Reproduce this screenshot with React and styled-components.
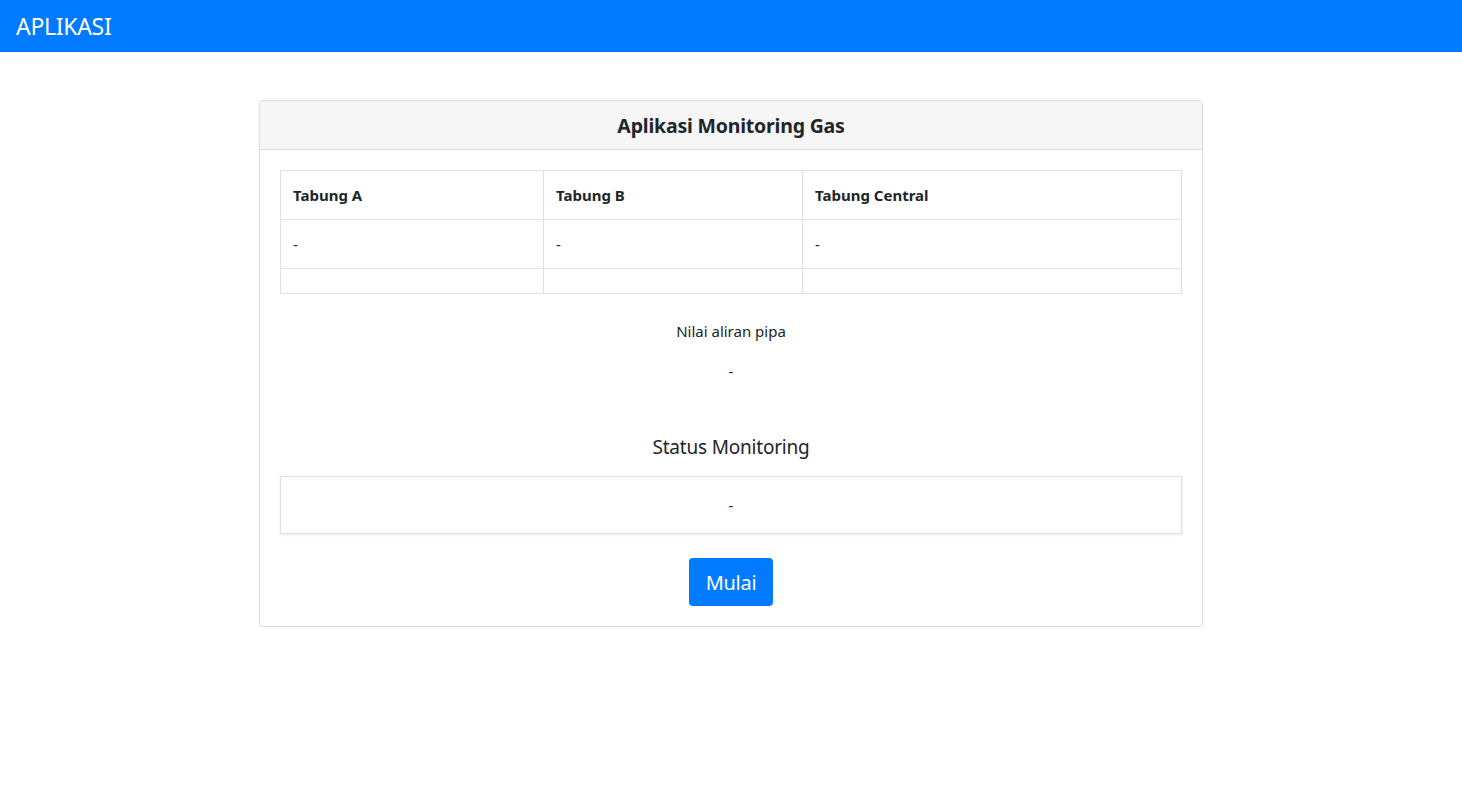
import React, { useState } from "react";
import styled, { createGlobalStyle } from "styled-components";

const GlobalStyle = createGlobalStyle`
  *, *::before, *::after {
    box-sizing: border-box;
  }
  body {
    margin: 0;
    font-family: "Noto Sans", "Open Sans", sans-serif;
    color: #212529;
    background: #fff;
  }
`;

const Navbar = styled.nav`
  height: 52px;
  background-color: #007bff;
  display: flex;
  align-items: center;
  padding: 0 16px;
  .brand {
    color: #fff;
    font-size: 23px;
    letter-spacing: -0.3px;
  }
`;

const Page = styled.main`
  display: flex;
  justify-content: center;
  padding-top: 48px;
`;

const Card = styled.div`
  width: 944px;
  border: 1px solid #dcdcdc;
  border-radius: 4px;
  box-shadow: 0 1px 2px rgba(0, 0, 0, 0.05);
  overflow: hidden;
`;

const CardHeader = styled.div`
  height: 49px;
  background-color: #f6f6f6;
  border-bottom: 1px solid #dcdcdc;
  display: flex;
  align-items: center;
  justify-content: center;
  h5 {
    margin: 0;
    font-size: 19.5px;
    font-weight: 700;
    letter-spacing: -0.2px;
  }
`;

const CardBody = styled.div`
  padding: 20px;
  display: flex;
  flex-direction: column;
  align-items: center;
`;

const Table = styled.table`
  width: 100%;
  border-collapse: collapse;
  font-size: 15px;
  th,
  td {
    border: 1px solid #dee2e6;
    padding: 0 12px;
    text-align: left;
  }
  th {
    height: 49px;
    font-weight: 700;
  }
  td {
    height: 49px;
  }
  tr.empty td {
    height: 25px;
  }
`;

const Flow = styled.div`
  margin-top: 26px;
  display: flex;
  flex-direction: column;
  align-items: center;
  gap: 18px;
  font-size: 15px;
  line-height: 22px;
`;

const StatusTitle = styled.h4`
  margin: 53px 0 17px;
  font-size: 19px;
  font-weight: 400;
  line-height: 24px;
  letter-spacing: -0.2px;
`;

const StatusBox = styled.div`
  width: 100%;
  height: 58px;
  border: 1px solid #dee2e6;
  box-shadow: 0 1px 3px rgba(0, 0, 0, 0.08);
  display: flex;
  align-items: center;
  justify-content: center;
  font-size: 15px;
`;

const Button = styled.button`
  margin-top: 24px;
  width: 84px;
  height: 48px;
  border: none;
  border-radius: 4px;
  background-color: #007bff;
  color: #fff;
  font-family: inherit;
  font-size: 20px;
  letter-spacing: -0.3px;
  cursor: pointer;
  :hover {
    background-color: #0069d9;
  }
`;

const columns = [
  { title: "Tabung A", width: "263px" },
  { title: "Tabung B", width: "259px" },
  { title: "Tabung Central", width: "auto" },
];

const App = () => {
  const [values] = useState({ a: "-", b: "-", c: "-", flow: "-", status: "-" });
  return (
    <>
      <GlobalStyle />
      <Navbar>
        <span className="brand">APLIKASI</span>
      </Navbar>
      <Page>
        <Card>
          <CardHeader>
            <h5>Aplikasi Monitoring Gas</h5>
          </CardHeader>
          <CardBody>
            <Table>
              <colgroup>
                {columns.map((c) => (
                  <col key={c.title} style={{ width: c.width }} />
                ))}
              </colgroup>
              <thead>
                <tr>
                  {columns.map((c) => (
                    <th key={c.title}>{c.title}</th>
                  ))}
                </tr>
              </thead>
              <tbody>
                <tr>
                  <td>{values.a}</td>
                  <td>{values.b}</td>
                  <td>{values.c}</td>
                </tr>
                <tr className="empty">
                  <td></td>
                  <td></td>
                  <td></td>
                </tr>
              </tbody>
            </Table>
            <Flow>
              <span>Nilai aliran pipa</span>
              <span>{values.flow}</span>
            </Flow>
            <StatusTitle>Status Monitoring</StatusTitle>
            <StatusBox>{values.status}</StatusBox>
            <Button>Mulai</Button>
          </CardBody>
        </Card>
      </Page>
    </>
  );
};

export default App;
